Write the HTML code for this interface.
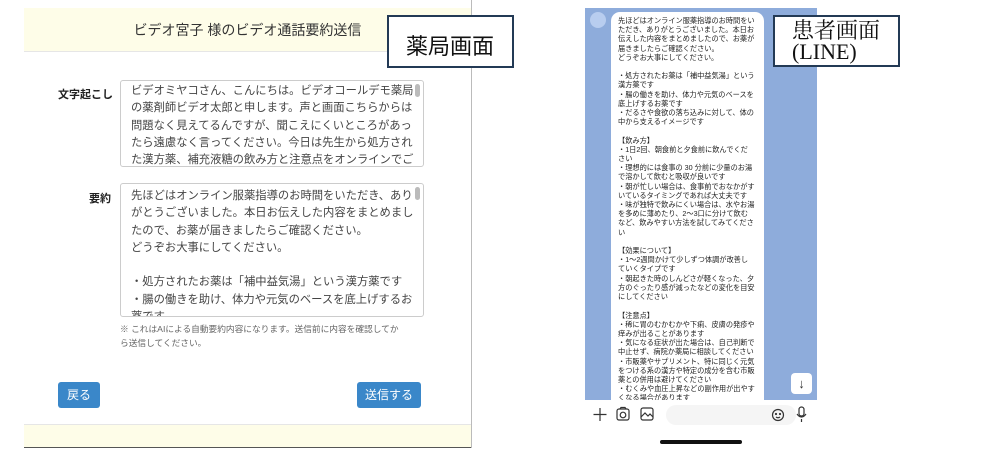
<!DOCTYPE html>
<html><head><meta charset="utf-8"><style>
*{margin:0;padding:0;box-sizing:border-box}
body{width:982px;height:457px;background:#fff;position:relative;overflow:hidden;font-family:"Liberation Sans","Noto Sans CJK JP",sans-serif;color:#333}
.a{position:absolute}
.hdr{left:24px;top:8px;width:447px;height:44px;background:#fefde8;border-bottom:1px solid #e6e6e6;text-align:center;font-size:14px;line-height:44px;color:#333}
.vl{left:471px;top:0;width:1px;height:448px;background:#bbb}
.ftr{left:24px;top:424px;width:447px;height:24px;background:#fefde8;border-top:1px solid #e6e6e6;border-bottom:1px solid #555}
.lbl{font-size:11px;font-weight:bold;color:#222}
.ta{border:1px solid #ccc;border-radius:3px;background:#fff;overflow:hidden;font-size:11.3px;line-height:17.3px;padding:0 14px 0 10px;color:#444;white-space:nowrap}
.sb{position:absolute;right:3px;top:3px;width:5px;height:13px;background:#bbb;border-radius:3px}
.btn{background:#3a87c9;color:#fff;font-size:12px;border-radius:3px;text-align:center;line-height:26px}
.box{border:2px solid #233a55;background:#fff;color:#111}
.bub{left:611px;top:12px;width:153px;height:388px;background:#fff;border-radius:9px 9px 0 0;font-size:7.2px;line-height:9.2px;padding:4px 4px 0 7px;color:#222;overflow:hidden;white-space:nowrap}
</style></head><body>
<div class="a hdr">ビデオ宮子 様のビデオ通話要約送信</div>
<div class="a vl"></div>
<div class="a lbl" style="left:58px;top:86px">文字起こし</div>
<div class="a ta" style="left:120px;top:80px;width:304px;height:87px;padding-top:2px">ビデオミヤコさん、こんにちは。ビデオコールデモ薬局<br>の薬剤師ビデオ太郎と申します。声と画面こちらからは<br>問題なく見えてるんですが、聞こえにくいところがあっ<br>たら遠慮なく言ってください。今日は先生から処方され<br>た漢方薬、補充液糖の飲み方と注意点をオンラインでご<br>説明させていただきます。お手元に薬袋やパッケージの<div class="sb"></div></div>
<div class="a lbl" style="left:89px;top:190px">要約</div>
<div class="a ta" style="left:120px;top:183px;width:304px;height:134px;padding-top:4px">先ほどはオンライン服薬指導のお時間をいただき、あり<br>がとうございました。本日お伝えした内容をまとめまし<br>たので、お薬が届きましたらご確認ください。<br>どうぞお大事にしてください。<br><br>・処方されたお薬は「補中益気湯」という漢方薬です<br>・腸の働きを助け、体力や元気のベースを底上げするお<br>薬です<br>・だるさや食欲の落ち込みに対して、体の中から支える<div class="sb"></div></div>
<div class="a" style="left:120px;top:322px;font-size:8.7px;line-height:14px;color:#666;width:300px;white-space:nowrap">※ これはAIによる自動要約内容になります。送信前に内容を確認してか<br>ら送信してください。</div>
<div class="a btn" style="left:58px;top:382px;width:42px;height:26px">戻る</div>
<div class="a btn" style="left:357px;top:382px;width:64px;height:26px">送信する</div>
<div class="a ftr"></div>
<div class="a box" style="left:387px;top:15px;width:127px;height:53px;font-size:22px;padding:12px 0 0 17px">薬局画面</div>

<div class="a" style="left:585px;top:8px;width:232px;height:392px;background:#8eacdb"></div>
<div class="a" style="left:590px;top:12px;width:16px;height:16px;border-radius:50%;background:#b8cdef"></div>
<div class="a bub">先ほどはオンライン服薬指導のお時間をい<br>ただき、ありがとうございました。本日お<br>伝えした内容をまとめましたので、お薬が<br>届きましたらご確認ください。<br>どうぞお大事にしてください。<br><br>・処方されたお薬は「補中益気湯」という<br>漢方薬です<br>・腸の働きを助け、体力や元気のベースを<br>底上げするお薬です<br>・だるさや食欲の落ち込みに対して、体の<br>中から支えるイメージです<br><br>【飲み方】<br>・1日2回、朝食前と夕食前に飲んでくだ<br>さい<br>・理想的には食事の 30 分前に少量のお湯<br>で溶かして飲むと吸収が良いです<br>・朝が忙しい場合は、食事前でおなかがす<br>いているタイミングであれば大丈夫です<br>・味が独特で飲みにくい場合は、水やお湯<br>を多めに薄めたり、2～3口に分けて飲む<br>など、飲みやすい方法を試してみてくださ<br>い<br><br>【効果について】<br>・1～2週間かけて少しずつ体調が改善し<br>ていくタイプです<br>・朝起きた時のしんどさが軽くなった、夕<br>方のぐったり感が減ったなどの変化を目安<br>にしてください<br><br>【注意点】<br>・稀に胃のむかむかや下痢、皮膚の発疹や<br>痒みが出ることがあります<br>・気になる症状が出た場合は、自己判断で<br>中止せず、病院か薬局に相談してください<br>・市販薬やサプリメント、特に同じく元気<br>をつける系の漢方や特定の成分を含む市販<br>薬との併用は避けてください<br>・むくみや血圧上昇などの副作用が出やす<br>くなる場合があります</div>
<div class="a" style="left:791px;top:373px;width:21px;height:21px;background:#fff;border-radius:4px;text-align:center;font-size:13px;line-height:21px;color:#333">↓</div>
<svg class="a" style="left:590px;top:404px" width="230" height="22" viewBox="0 0 230 22" fill="none" stroke="#333" stroke-width="1.2">
<path d="M10 4v13M3.5 10.5h13"/>
<rect x="27" y="5" width="12" height="11" rx="2"/><circle cx="33" cy="11" r="2.8"/><path d="M30 5l1-1.5h4l1 1.5"/>
<rect x="51" y="4" width="12" height="12" rx="2"/><path d="M51 13l4-4 3 3 2-2 3 3"/>
<rect x="76" y="1" width="130" height="20" rx="10" fill="#f5f5f5" stroke="none"/>
<circle cx="188" cy="11" r="5.5"/><circle cx="186" cy="10" r=".5"/><circle cx="190" cy="10" r=".5"/><path d="M186 13q2 1.5 4 0"/>
<rect x="209" y="3" width="5" height="9" rx="2.5"/><path d="M207 10q4.5 6 9 0M211.5 15v3"/>
</svg>
<div class="a" style="left:660px;top:440px;width:82px;height:4px;border-radius:2px;background:#111"></div>
<div class="a box" style="left:773px;top:15px;width:127px;height:52px;font-family:'Liberation Serif','Noto Serif CJK JP',serif;font-size:22px;line-height:21px;padding:3px 0 0 17px;white-space:nowrap">患者画面<br>(LINE)</div>
</body></html>
